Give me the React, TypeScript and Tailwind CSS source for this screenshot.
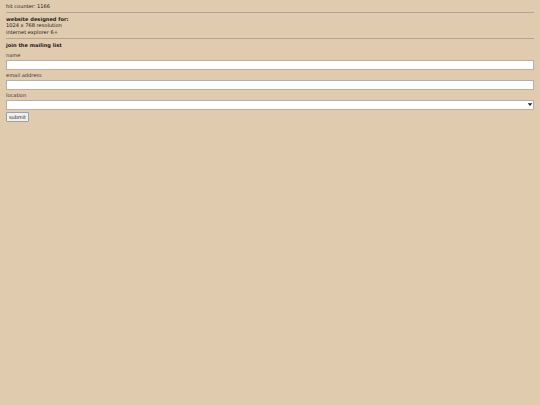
export default function App() {
  return (
    <div className="min-h-[405px] bg-[#e1cbaf] px-[6px] pt-[2.75px] text-[5.1px] leading-[6.5px] text-[#1a1a1a] font-['DejaVu_Sans',Verdana,sans-serif]">
      <p>hit counter: 1166</p>
      <hr className="mt-[2.75px] border-t border-[#b3a593]" />

      <div className="py-[2.75px]">
        <p className="font-bold">website designed for:</p>
        <p>1024 x 768 resolution</p>
        <p>internet explorer 6+</p>
      </div>
      <hr className="border-t border-[#b3a593]" />

      <form className="pt-[2.75px] flex flex-col" onSubmit={(e) => e.preventDefault()}>
        <p className="font-bold">join the mailing list</p>
        <label className="mt-[3.5px] mb-[1.75px] text-[#333]">name</label>
        <input type="text" className="h-[10px] bg-white border border-[#b8b0a4]" />
        <label className="mt-[1.75px] mb-[1.75px] text-[#333]">email address</label>
        <input type="text" className="h-[10px] bg-white border border-[#b8b0a4]" />
        <label className="mt-[1.75px] mb-[1.75px] text-[#333]">location</label>
        <div className="relative">
          <select className="w-full h-[10px] appearance-none bg-white border border-[#b8b0a4] text-[5px]">
            <option></option>
          </select>
          <svg className="absolute right-[2px] top-[3px] w-[4px] h-[3px] pointer-events-none" viewBox="0 0 4 3">
            <path d="M0 0h4v0.7H0z M0.3 1h3.4L2 3z" fill="#222" />
          </svg>
        </div>
        <div className="mt-[2px]">
          <button type="submit" className="h-[9.5px] w-[23px] bg-[#f0f0f0] border border-[#a0a0a0] rounded-[1px] text-[5px] leading-[6px] text-[#222]">
            submit
          </button>
        </div>
      </form>
    </div>
  );
}
